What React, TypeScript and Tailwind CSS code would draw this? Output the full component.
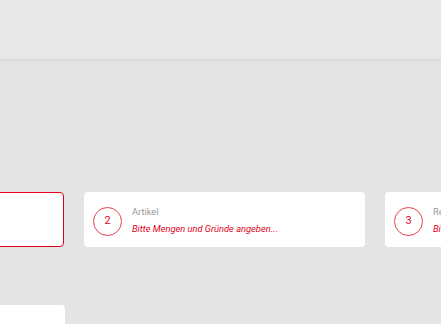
import { memo } from "react";

type Step = { n: number; label: string; hint: string; active?: boolean };

const steps: Step[] = [
  { n: 1, label: "Kontakt", hint: "Bitte Kontaktdaten angeben...", active: true },
  { n: 2, label: "Artikel", hint: "Bitte Mengen und Gründe angeben..." },
  { n: 3, label: "Retourenart", hint: "Bitte Retourenart auswählen..." },
];

const StepCard = memo(function StepCard({ step }: { step: Step }) {
  return (
    <div
      className={`flex h-[55px] w-[281px] shrink-0 items-center gap-[10px] rounded-[4px] bg-white pl-[9px] ${
        step.active ? "border-[1.5px] border-[#e2001a]" : ""
      }`}
    >
      <div className="mt-[4px] flex h-[29px] w-[29px] shrink-0 items-center justify-center rounded-full border border-[#e8404f] text-[11px] text-[#e2001a]">
        {step.n}
      </div>
      <div className="flex flex-col gap-[4px] leading-[13px]">
        <span className="text-[9.3px] text-[#999999]">{step.label}</span>
        <span className="text-[9.3px] italic text-[#e2001a]">{step.hint}</span>
      </div>
    </div>
  );
});

export default function App() {
  return (
    <div
      className="flex h-[324px] w-[441px] flex-col overflow-hidden bg-[#e4e4e4]"
      style={{ fontFamily: "Roboto, 'Liberation Sans', sans-serif" }}
    >
      {/* Kopfbereich */}
      <div className="h-[61px] shrink-0 border-b-2 border-[#d9d9d9] bg-[#e8e8e8]" />

      {/* Schritte - horizontal verschoben */}
      <div className="mt-[131px] flex gap-[20px] -ml-[217px]">
        {steps.map((s) => (
          <StepCard key={s.n} step={s} />
        ))}
      </div>

      {/* Formular-Karte unten */}
      <div className="mt-[58px] -ml-[215px] h-[60px] w-[280px] shrink-0 rounded-[4px] bg-white" />
    </div>
  );
}
